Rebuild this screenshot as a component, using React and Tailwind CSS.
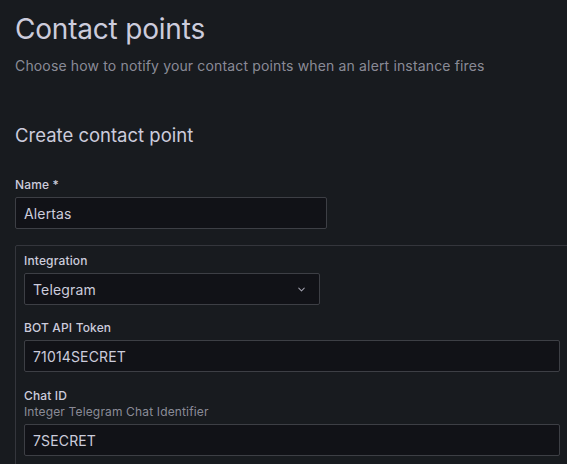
import { ChevronDown } from "lucide-react";

const font = { fontFamily: "Inter, 'Noto Sans', sans-serif" };

function Label({ children, description }) {
  return (
    <div className="mb-[4px] tracking-[0.15px]">
      <div className="text-[12px] leading-[16px] font-medium text-[#ccccdc]">{children}</div>
      {description && (
        <div className="text-[12px] leading-[16px] text-[#ccccdc]/65">{description}</div>
      )}
    </div>
  );
}

function TextInput({ value, className = "" }) {
  return (
    <div
      className={`h-[32px] flex items-center px-[8px] bg-[#111217] border border-[#3d3f45] rounded-[2px] text-[14px] tracking-[0.15px] text-[#ccccdc] ${className}`}
    >
      {value}
    </div>
  );
}

export default function App() {
  return (
    <div className="min-h-screen w-full overflow-hidden bg-[#181b1f] text-[#ccccdc]" style={font}>
      <div className="pt-[12px] pl-[15px]">
        <h1 className="text-[28px] leading-[34px] font-normal tracking-[-0.2px] text-[#ccccdc]">
          Contact points
        </h1>
        <p className="mt-[9px] text-[14px] leading-[21px] tracking-[0.15px] text-[#ccccdc]/65">
          Choose how to notify your contact points when an alert instance fires
        </p>

        <h3 className="mt-[47px] text-[18.5px] leading-[24px] font-normal">Create contact point</h3>

        <div className="mt-[30px]">
          <Label>Name *</Label>
          <TextInput value="Alertas" className="w-[312px]" />
        </div>

        <div className="mt-[16px] w-[554px] border border-[#34363c] rounded-[2px] pt-[7px] px-[8px] pb-[16px]">
          <div>
            <Label>Integration</Label>
            <div className="w-[296px] h-[32px] flex items-center justify-between pl-[8px] pr-[12px] bg-[#111217] border border-[#3d3f45] rounded-[2px] text-[14px] tracking-[0.15px]">
              <span>Telegram</span>
              <ChevronDown size={11} strokeWidth={2.2} className="text-[#a0a0ad]" />
            </div>
          </div>

          <div className="mt-[15px]">
            <Label>BOT API Token</Label>
            <TextInput value="71014SECRET" className="w-[536px]" />
          </div>

          <div className="mt-[16px]">
            <Label description="Integer Telegram Chat Identifier">Chat ID</Label>
            <TextInput value="7SECRET" className="w-[536px]" />
          </div>
        </div>
      </div>
    </div>
  );
}
